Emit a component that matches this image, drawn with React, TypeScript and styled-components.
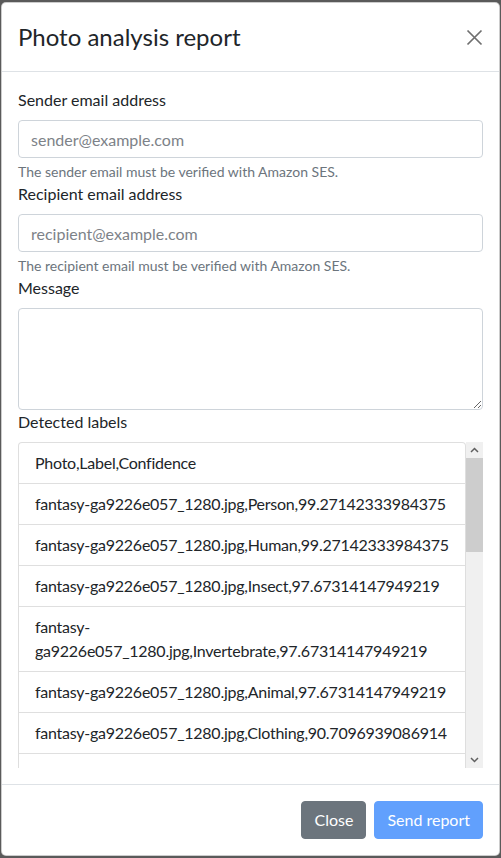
import React from "react";
import styled, { createGlobalStyle } from "styled-components";

const GlobalStyle = createGlobalStyle`
  html, body { margin: 0; padding: 0; }
  body {
    background: #5a5a5a;
    font-family: Lato, "Liberation Sans", sans-serif;
    color: #212529;
  }
  * { box-sizing: border-box; }
`;

const Backdrop = styled.div`
  min-height: 858px;
  padding: 2px 0 1px 1px;
  background: #5a5a5a;
`;

const Modal = styled.div`
  width: 499px;
  background: #fff;
  border: 1px solid rgba(0, 0, 0, 0.2);
  border-radius: 5px;
  display: flex;
  flex-direction: column;
  overflow: hidden;
`;

const Header = styled.div`
  display: flex;
  align-items: center;
  justify-content: space-between;
  padding: 16px;
  border-bottom: 1px solid #dee2e6;
`;

const Title = styled.h5`
  margin: 0;
  font-size: 24px;
  line-height: 36px;
  font-weight: 400;
  color: #212529;
`;

const CloseX = styled.button`
  width: 17px;
  height: 17px;
  padding: 0;
  border: 0;
  background: transparent;
  display: flex;
  align-items: center;
  justify-content: center;
  cursor: pointer;
`;

const Body = styled.div`
  padding: 16px;
  display: flex;
  flex-direction: column;
`;

const Label = styled.label`
  display: block;
  font-size: 16px;
  line-height: 24px;
  margin-bottom: 8px;
`;

const Input = styled.input`
  display: block;
  width: 100%;
  height: 38px;
  padding: 6px 12px;
  font-family: inherit;
  font-size: 16px;
  line-height: 24px;
  color: #212529;
  border: 1px solid #ced4da;
  border-radius: 4px;
  background: #fff;
  &::placeholder {
    color: #7d8288;
  }
`;

const Help = styled.div`
  margin-top: 4px;
  font-size: 14px;
  line-height: 20px;
  color: #6c757d;
`;

const TextArea = styled.textarea`
  display: block;
  width: 100%;
  height: 102px;
  padding: 6px 12px;
  font-family: inherit;
  font-size: 16px;
  line-height: 24px;
  border: 1px solid #ced4da;
  border-radius: 4px;
  resize: vertical;
`;

const ScrollFrame = styled.div`
  display: flex;
  height: 326px;
`;

const Viewport = styled.div`
  flex: 1;
  min-width: 0;
  overflow: hidden;
`;

const ScrollBar = styled.div`
  width: 17px;
  flex: none;
  display: flex;
  flex-direction: column;
  background: #f0f0f0;
`;

const ArrowButton = styled.div`
  height: 16px;
  flex: none;
  display: flex;
  align-items: center;
  justify-content: center;
`;

const Track = styled.div`
  flex: 1;
  display: flex;
  flex-direction: column;
`;

const Thumb = styled.div`
  height: 94px;
  background: #cdcdcd;
`;

const ListGroup = styled.ul`
  margin: 0;
  padding: 0;
  list-style: none;
  border-radius: 4px 4px 0 0;
  border: 1px solid rgba(0, 0, 0, 0.125);
  border-bottom: 0;
`;

const ListItem = styled.li`
  padding: 8px 16px;
  font-size: 16px;
  line-height: 24px;
  letter-spacing: -0.25px;
  border-bottom: 1px solid rgba(0, 0, 0, 0.125);
  color: #212529;
`;

const Footer = styled.div`
  display: flex;
  justify-content: flex-end;
  align-items: center;
  padding: 12px;
  border-top: 1px solid #dee2e6;
`;

const Button = styled.button<{ $variant: "secondary" | "primary"; $disabled?: boolean }>`
  margin: 4px;
  padding: 6px 12px;
  font-family: inherit;
  font-size: 16px;
  line-height: 24px;
  color: #fff;
  border-radius: 4px;
  border: 1px solid ${(p) => (p.$variant === "primary" ? "#0d6efd" : "#6c757d")};
  background: ${(p) => (p.$variant === "primary" ? "#0d6efd" : "#6c757d")};
  opacity: ${(p) => (p.$disabled ? 0.65 : 1)};
`;

const file = "fantasy-ga9226e057_1280.jpg";
const rows: string[] = [
  "Photo,Label,Confidence",
  `${file},Person,99.27142333984375`,
  `${file},Human,99.27142333984375`,
  `${file},Insect,97.67314147949219`,
  `${file},Invertebrate,97.67314147949219`,
  `${file},Animal,97.67314147949219`,
  `${file},Clothing,90.7096939086914`,
  `${file},Apparel,90.7096939086914`,
];

const Chevron = ({ up }: { up?: boolean }) => (
  <svg width="9" height="6" viewBox="0 0 9 6">
    <path
      d={up ? "M1 5 L4.5 1.5 L8 5" : "M1 1 L4.5 4.5 L8 1"}
      fill="none"
      stroke="#5f5f5f"
      strokeWidth="1.5"
    />
  </svg>
);

export default function App() {
  return (
    <Backdrop>
      <GlobalStyle />
      <Modal>
        <Header>
          <Title>Photo analysis report</Title>
          <CloseX aria-label="Close">
            <svg width="17" height="17" viewBox="0 0 17 17">
              <path d="M1.5 1.5 L15.5 15.5 M15.5 1.5 L1.5 15.5" stroke="#6f6f6f" strokeWidth="1.7" fill="none" />
            </svg>
          </CloseX>
        </Header>
        <Body>
          <Label>Sender email address</Label>
          <Input placeholder="sender@example.com" />
          <Help>The sender email must be verified with Amazon SES.</Help>
          <Label>Recipient email address</Label>
          <Input placeholder="recipient@example.com" />
          <Help>The recipient email must be verified with Amazon SES.</Help>
          <Label>Message</Label>
          <TextArea />
          <Label>Detected labels</Label>
          <ScrollFrame>
            <Viewport>
              <ListGroup>
                {rows.map((r, i) => (
                  <ListItem key={i}>{r}</ListItem>
                ))}
              </ListGroup>
            </Viewport>
            <ScrollBar>
              <ArrowButton>
                <Chevron up />
              </ArrowButton>
              <Track>
                <Thumb />
              </Track>
              <ArrowButton>
                <Chevron />
              </ArrowButton>
            </ScrollBar>
          </ScrollFrame>
        </Body>
        <Footer>
          <Button $variant="secondary">Close</Button>
          <Button $variant="primary" $disabled>
            Send report
          </Button>
        </Footer>
      </Modal>
    </Backdrop>
  );
}
